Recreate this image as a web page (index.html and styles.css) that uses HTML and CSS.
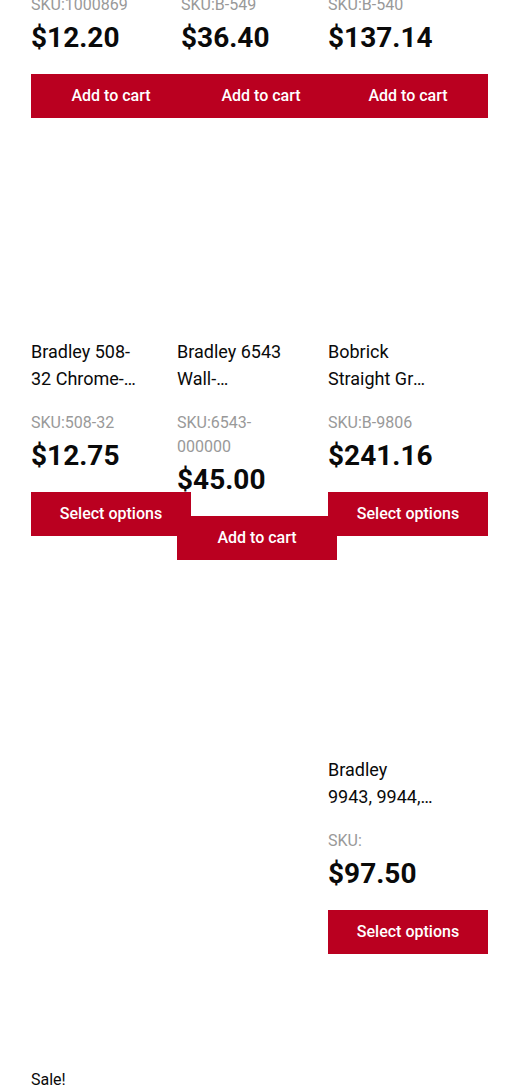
FILE: index.html
```html
<!DOCTYPE html>
<html lang="en">
<head>
    <meta charset="UTF-8">
    <meta name="viewport" content="width=device-width, initial-scale=1.0">
    <title>Products</title>
    <link rel="stylesheet" href="styles.css">
</head>
<body>
    <ul class="products">
        <!-- row 1 (scrolled, only the bottom shows) -->
        <li class="product product--cut">
            <div class="sku">SKU:1000869</div>
            <div class="price">$12.20</div>
            <a class="button" href="#">Add to cart</a>
        </li>
        <li class="product product--cut product--shift">
            <div class="sku">SKU:B-549</div>
            <div class="price">$36.40</div>
            <a class="button" href="#">Add to cart</a>
        </li>
        <li class="product product--cut">
            <div class="sku">SKU:B-540</div>
            <div class="price">$137.14</div>
            <a class="button" href="#">Add to cart</a>
        </li>

        <!-- row 2 -->
        <li class="product">
            <div class="thumb"></div>
            <h2 class="title">Bradley 508-32 Chrome-Plated Shower Head</h2>
            <div class="sku">SKU:508-32</div>
            <div class="price">$12.75</div>
            <a class="button" href="#">Select options</a>
        </li>
        <li class="product">
            <div class="thumb"></div>
            <h2 class="title">Bradley 6543 Wall-Mounted Soap Dispenser</h2>
            <div class="sku">SKU:6543-000000</div>
            <div class="price">$45.00</div>
            <a class="button" href="#">Add to cart</a>
        </li>
        <li class="product">
            <div class="thumb"></div>
            <h2 class="title">Bobrick Straight Grab Bar</h2>
            <div class="sku">SKU:B-9806</div>
            <div class="price">$241.16</div>
            <a class="button" href="#">Select options</a>
        </li>

        <!-- row 3 -->
        <li class="product product--last">
            <div class="thumb"></div>
            <h2 class="title">Bradley 9943, 9944, 9945 Grab Bar</h2>
            <div class="sku">SKU:</div>
            <div class="price">$97.50</div>
            <a class="button" href="#">Select options</a>
        </li>

        <!-- row 4 -->
        <li class="product product--first">
            <div class="thumb">
                <span class="onsale">Sale!</span>
            </div>
        </li>
    </ul>
</body>
</html>
```

FILE: styles.css
```css
html, body {
    overflow: hidden;
}
body {
    font-family: Roboto, "Liberation Sans", sans-serif;
    background-color: #fff;
    color: #0a0a0a;
    margin: 0;
    padding: 0;
}
.products {
    list-style: none;
    margin: -7px 0 0 0;
    padding: 0 0 0 31px;
    display: grid;
    grid-template-columns: 146px 151px 160px;
    align-items: start;
    row-gap: 20px;
}
.product {
    height: 398px;
    min-width: 0;
}
.product--cut {
    height: auto;
}
.product--shift {
    margin-left: 4px;
}
.product--last {
    grid-column: 3;
}
.product--first {
    grid-column: 1;
}
.thumb {
    height: 190px;
    margin-bottom: 10px;
}
.onsale {
    display: block;
    padding-top: 94px;
    font-size: 16px;
    line-height: 24px;
}
.title {
    width: 105px;
    margin: 0 0 19px 0;
    font-size: 18px;
    font-weight: 400;
    line-height: 27px;
    display: -webkit-box;
    -webkit-line-clamp: 2;
    -webkit-box-orient: vertical;
    overflow: hidden;
}
.sku {
    width: 105px;
    font-size: 16px;
    line-height: 24px;
    color: #999;
}
.price {
    margin-top: 4px;
    font-size: 28px;
    font-weight: 700;
    line-height: 34px;
}
.button {
    display: block;
    width: 160px;
    height: 44px;
    margin-top: 19px;
    background-color: #ba0020;
    color: #fff;
    text-align: center;
    line-height: 44px;
    font-size: 16px;
    font-weight: 500;
    text-decoration: none;
}
```
